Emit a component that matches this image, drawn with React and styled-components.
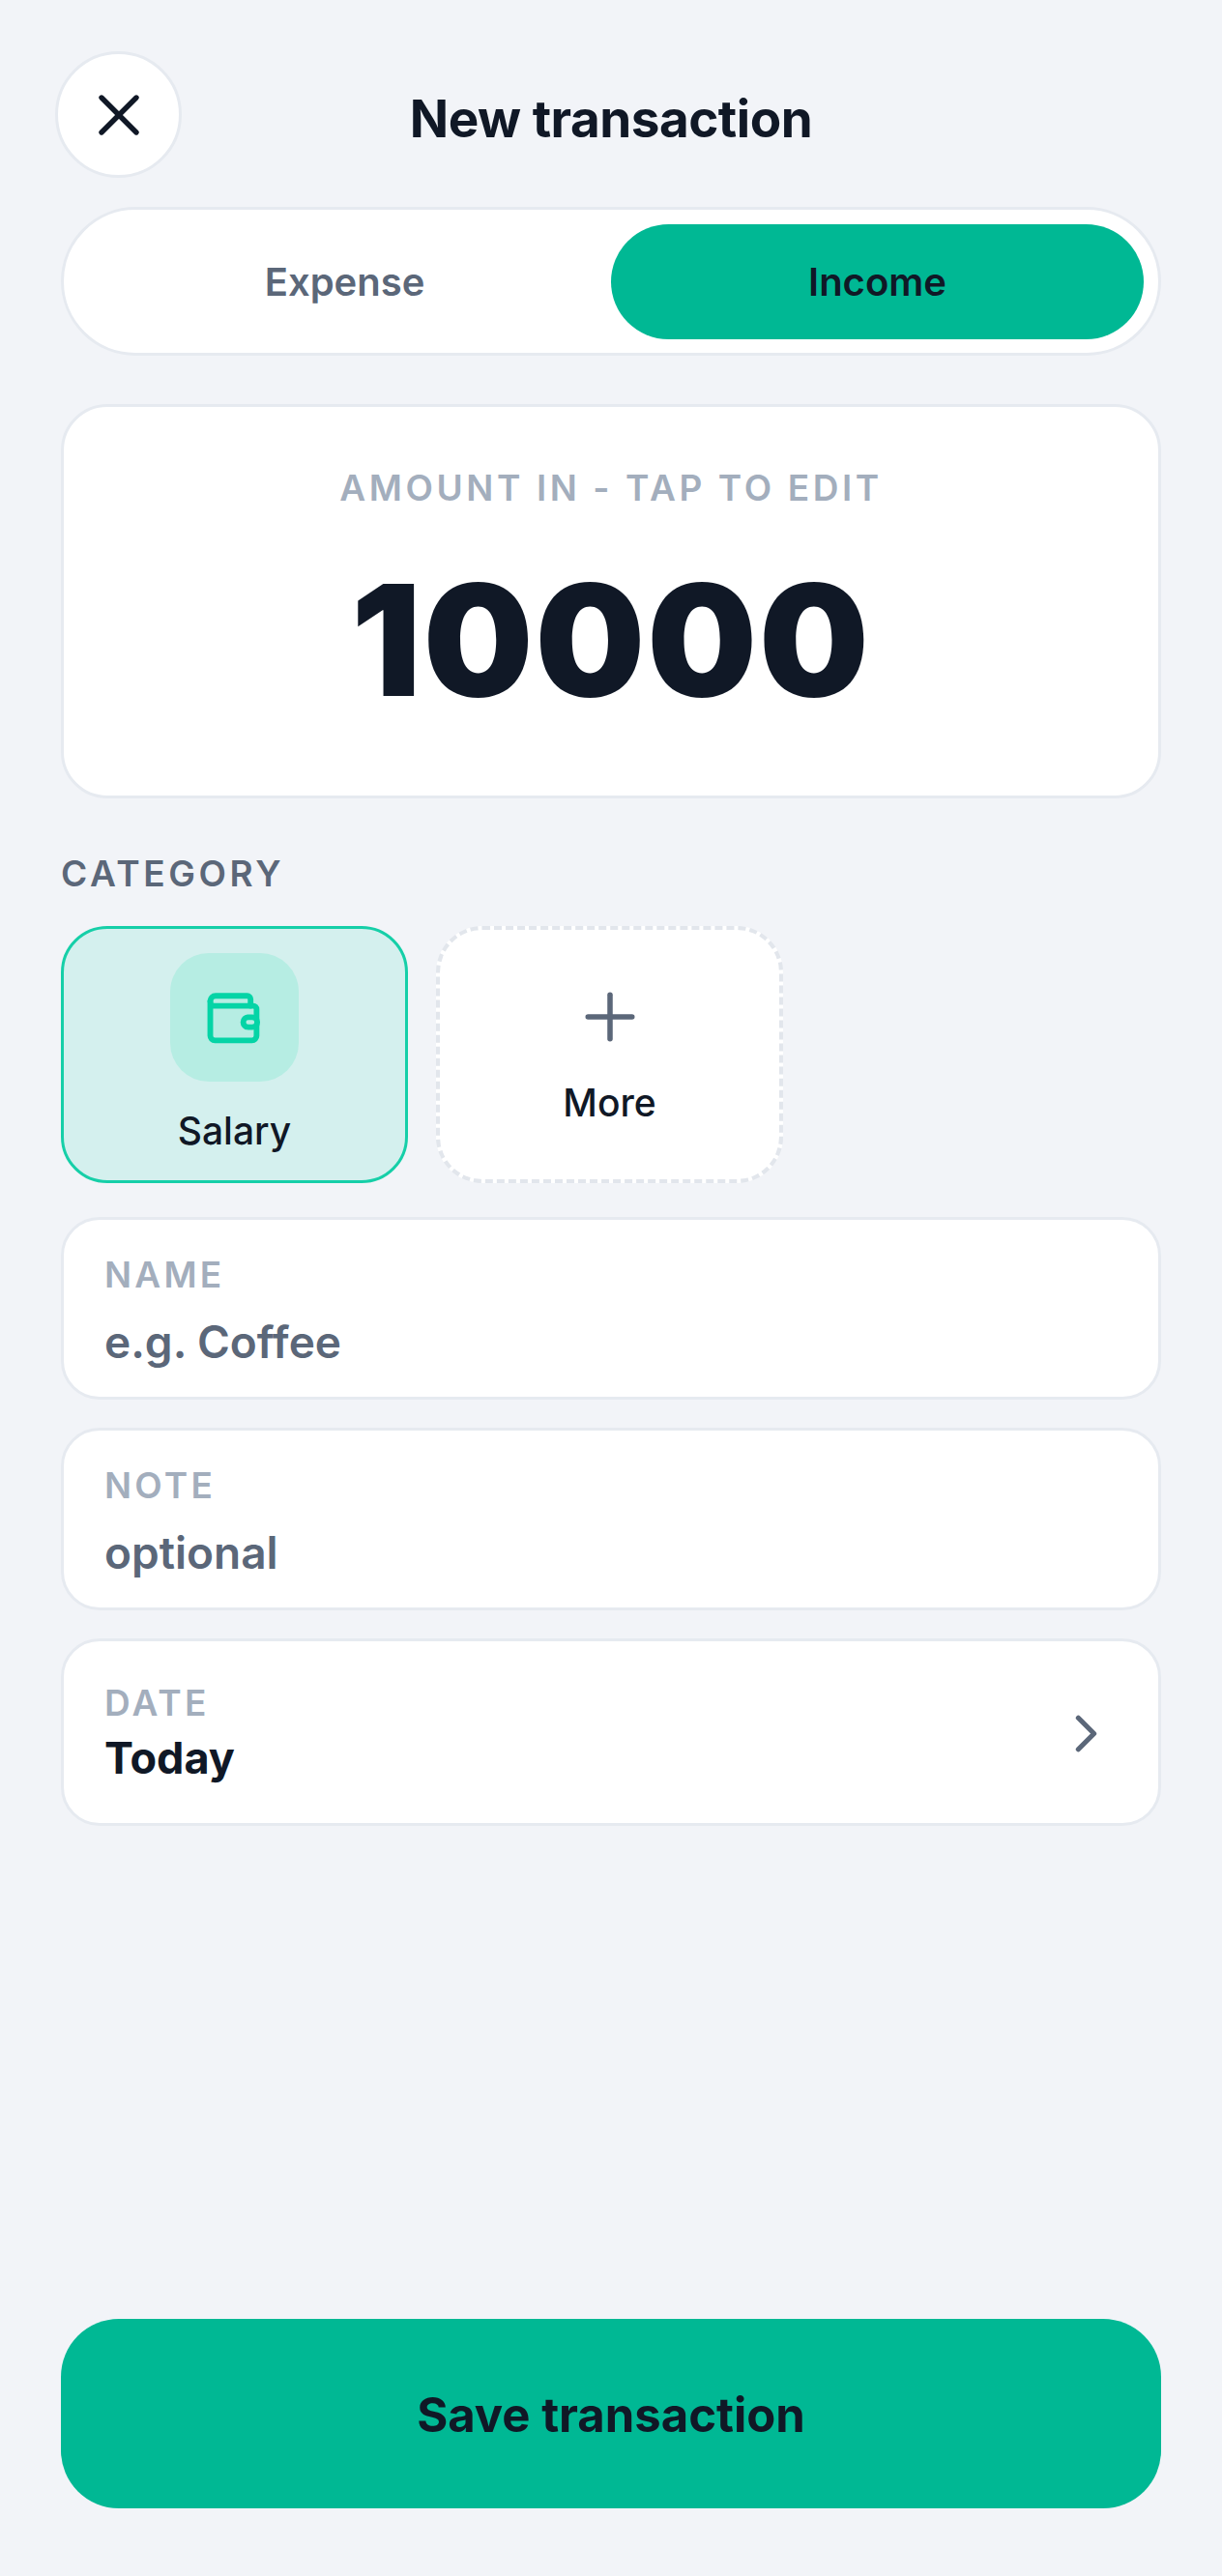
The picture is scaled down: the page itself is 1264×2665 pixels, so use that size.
import React from 'react'
import styled, { createGlobalStyle } from 'styled-components'
import { X, Plus, ChevronRight } from 'lucide-react'

const GlobalStyle = createGlobalStyle`
  html, body { margin: 0; padding: 0; background: #f2f4f8; }
  body { font-family: Inter, "Liberation Sans", sans-serif; color: #101826; }
`

const Screen = styled.div`
  box-sizing: border-box;
  width: 1264px;
  height: 2665px;
  padding: 54px 63px 70px 63px;
  display: flex;
  flex-direction: column;
  background: #f2f4f8;
`

const Header = styled.header`
  position: relative;
  height: 130px;
  display: flex;
  align-items: center;
  justify-content: center;
`

const CloseButton = styled.button`
  position: absolute;
  left: -6px;
  top: -1px;
  box-sizing: border-box;
  width: 131px;
  height: 131px;
  border-radius: 50%;
  border: 3px solid #e6eaf0;
  background: #fff;
  color: #101826;
  display: flex;
  align-items: center;
  justify-content: center;
  padding: 0;
`

const Title = styled.h1`
  margin: 8px 0 0;
  font-size: 53px;
  font-weight: 700;
  letter-spacing: -0.5px;
  color: #101826;
`

const Segment = styled.div`
  box-sizing: border-box;
  margin-top: 30px;
  height: 154px;
  padding: 15px 15px 14px;
  display: grid;
  grid-template-columns: 1fr 1fr;
  background: #fff;
  border: 3px solid #e6eaf0;
  border-radius: 77px;
`

const SegmentOption = styled.div`
  display: flex;
  align-items: center;
  justify-content: center;
  border-radius: 60px;
  font-size: 40px;
  font-weight: 600;
  color: ${p => (p.$active ? '#101826' : '#5b6779')};
  background: ${p => (p.$active ? '#00b894' : 'transparent')};
`

const AmountCard = styled.section`
  box-sizing: border-box;
  margin-top: 50px;
  height: 408px;
  display: flex;
  flex-direction: column;
  align-items: center;
  background: #fff;
  border: 3px solid #e6eaf0;
  border-radius: 48px;
`

const AmountLabel = styled.div`
  margin-top: 62px;
  font-size: 37px;
  line-height: 44px;
  font-weight: 600;
  letter-spacing: 3.6px;
  color: #a3aebd;
`

const AmountValue = styled.div`
  margin-top: 45px;
  font-size: 160px;
  line-height: 180px;
  font-weight: 900;
  letter-spacing: 2px;
  color: #101826;
`

const SectionLabel = styled.div`
  margin-top: 56px;
  font-size: 37px;
  line-height: 44px;
  font-weight: 600;
  letter-spacing: 3.6px;
  color: #5b6779;
`

const CategoryRow = styled.div`
  margin-top: 32px;
  display: flex;
  gap: 29px;
`

const CategoryCard = styled.div`
  box-sizing: border-box;
  width: 359px;
  height: 266px;
  display: flex;
  flex-direction: column;
  align-items: center;
  justify-content: flex-start;
  padding-top: ${p => (p.$selected ? 25 : 27)}px;
  border-radius: 48px;
  border: ${p => (p.$selected ? '3px solid #16cfa8' : '4px dashed #e2e6ec')};
  background: ${p => (p.$selected ? '#d4f0ee' : '#fff')};
`

const IconTile = styled.div`
  width: 133px;
  height: 133px;
  border-radius: 40px;
  background: #b6ede3;
  color: #05d4a6;
  display: flex;
  align-items: center;
  justify-content: center;
`

const PlusSlot = styled.div`
  width: 80px;
  height: 80px;
  margin-top: 23px;
  color: #5b6779;
  display: flex;
  align-items: center;
  justify-content: center;
`

const CategoryName = styled.div`
  margin-top: ${p => p.$gap}px;
  font-size: 39px;
  line-height: 46px;
  font-weight: 500;
  color: #101826;
`

const Fields = styled.div`
  margin-top: 35px;
  display: flex;
  flex-direction: column;
  gap: 29px;
`

const Field = styled.div`
  box-sizing: border-box;
  height: ${p => p.$height}px;
  padding: ${p => p.$shift}px 42px 0 42px;
  display: flex;
  align-items: center;
  justify-content: space-between;
  background: #fff;
  border: 3px solid #e6eaf0;
  border-radius: 40px;
`

const FieldLabel = styled.div`
  font-size: 37px;
  line-height: 42px;
  font-weight: 600;
  letter-spacing: 3.2px;
  color: #a3aebd;
`

const FieldValue = styled.div`
  margin-top: ${p => p.$gap}px;
  font-size: ${p => (p.$filled ? 45 : 46)}px;
  line-height: 54px;
  font-weight: ${p => (p.$filled ? 700 : 600)};
  color: ${p => (p.$filled ? '#101826' : '#5b6779')};
`

const SaveButton = styled.button`
  margin-top: auto;
  height: 196px;
  border: 0;
  border-radius: 60px;
  background: #00b894;
  color: #101826;
  font-family: inherit;
  font-size: 49px;
  font-weight: 700;
  padding-top: 4px;
`

function WalletIcon() {
  return (
    <svg width="62" height="58" viewBox="0 0 180 168" fill="none" stroke="currentColor" strokeWidth="17" strokeLinecap="round" strokeLinejoin="round">
      <path d="M16 34a16 16 0 0 1 16-16h95a10 10 0 0 1 10 10v20" />
      <path d="M16 34v104a14 14 0 0 0 14 14h111a14 14 0 0 0 14-14V58a10 10 0 0 0-10-10H28a12 12 0 0 1-12-12" />
      <rect x="115" y="82" width="42" height="30" rx="15" fill="#b6ede3" />
    </svg>
  )
}

export default function App() {
  return (
    <>
      <GlobalStyle />
      <Screen>
        <Header>
          <CloseButton><X size={72} strokeWidth={1.8} /></CloseButton>
          <Title>New transaction</Title>
        </Header>
        <Segment>
          <SegmentOption>Expense</SegmentOption>
          <SegmentOption $active>Income</SegmentOption>
        </Segment>
        <AmountCard>
          <AmountLabel>AMOUNT IN - TAP TO EDIT</AmountLabel>
          <AmountValue>10000</AmountValue>
        </AmountCard>
        <SectionLabel>CATEGORY</SectionLabel>
        <CategoryRow>
          <CategoryCard $selected>
            <IconTile><WalletIcon /></IconTile>
            <CategoryName $gap={28}>Salary</CategoryName>
          </CategoryCard>
          <CategoryCard>
            <PlusSlot><Plus size={78} strokeWidth={1.7} /></PlusSlot>
            <CategoryName $gap={26}>More</CategoryName>
          </CategoryCard>
        </CategoryRow>
        <Fields>
          <Field $height={189} $shift={5}>
            <div>
              <FieldLabel>NAME</FieldLabel>
              <FieldValue $gap={21}>e.g. Coffee</FieldValue>
            </div>
          </Field>
          <Field $height={189} $shift={5}>
            <div>
              <FieldLabel>NOTE</FieldLabel>
              <FieldValue $gap={21}>optional</FieldValue>
            </div>
          </Field>
          <Field $height={194} $shift={3}>
            <div>
              <FieldLabel>DATE</FieldLabel>
              <FieldValue $gap={9} $filled>Today</FieldValue>
            </div>
            <ChevronRight size={65} strokeWidth={1.9} color="#5b6779" />
          </Field>
        </Fields>
        <SaveButton>Save transaction</SaveButton>
      </Screen>
    </>
  )
}
